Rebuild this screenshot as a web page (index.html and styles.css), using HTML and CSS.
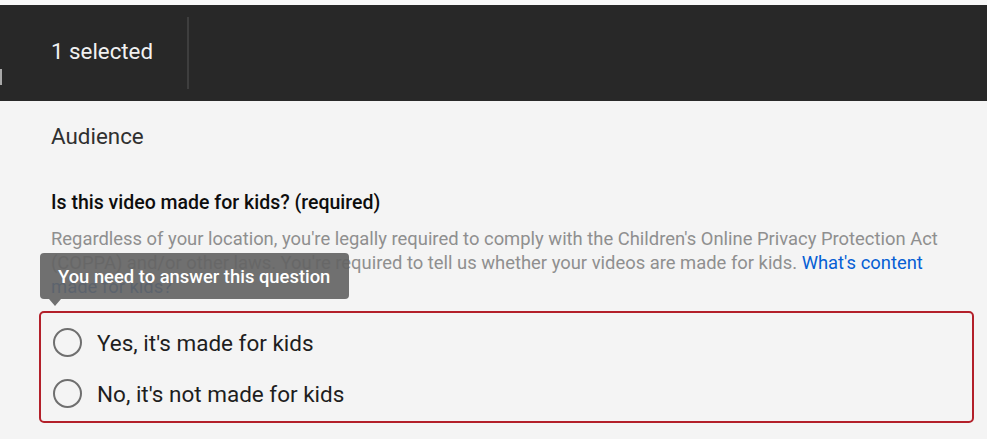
FILE: index.html
```html
<!DOCTYPE html>
<html lang="en">
<head>
<meta charset="utf-8">
<title>Audience</title>
<link rel="stylesheet" href="styles.css">
</head>
<body>
<div class="top-strip"></div>
<header class="header">
  <div class="edge-mark"></div>
  <div class="selected">1 selected</div>
  <div class="divider"></div>
</header>
<main class="content">
  <h2 class="section-title">Audience</h2>
  <h3 class="question">Is this video made for kids? (required)</h3>
  <div class="desc-wrap">
    <p class="desc">Regardless of your location, you're legally required to comply with the Children's Online Privacy Protection Act (COPPA) and/or other laws. You're required to tell us whether your videos are made for kids. <a class="link" href="#">What's content made for kids?</a></p>
    <div class="tooltip">You need to answer this question</div>
  </div>
  <div class="radio-box">
    <label class="radio-row"><span class="radio"></span><span class="radio-label">Yes, it's made for kids</span></label>
    <label class="radio-row"><span class="radio"></span><span class="radio-label">No, it's not made for kids</span></label>
  </div>
</main>
</body>
</html>
```
FILE: styles.css
```css
* { box-sizing: border-box; }
html, body { margin: 0; padding: 0; }
body {
  background: #f4f4f4;
  font-family: Roboto, "Noto Sans", sans-serif;
  width: 987px;
  height: 439px;
  overflow: hidden;
}
.top-strip {
  height: 5px;
  background: #f9f9f9;
}
.header {
  position: relative;
  height: 96px;
  background: #282828;
  display: flex;
  align-items: center;
}
.edge-mark {
  position: absolute;
  left: 0;
  top: 64px;
  width: 2px;
  height: 16px;
  background: #a8a8a8;
}
.selected {
  width: 187px;
  padding-left: 51px;
  color: #f1f1f1;
  font-size: 22.3px;
  line-height: 26px;
  margin-top: -5px;
}
.divider {
  width: 2px;
  height: 72px;
  background: #3e3e3e;
}
.content {
  padding: 22px 14px 0 51px;
}
.section-title {
  margin: 0;
  font-size: 22.4px;
  font-weight: 400;
  line-height: 26px;
  color: #303030;
}
.question {
  margin: 42px 0 0;
  font-size: 19.5px;
  font-weight: 500;
  line-height: 24px;
  color: #0d0d0d;
}
.desc-wrap {
  position: relative;
  margin-top: 12px;
}
.desc {
  margin: 0;
  font-size: 18.4px;
  line-height: 24px;
  color: #8f8f8f;
}
.link {
  color: #065fd4;
  text-decoration: none;
}
.tooltip {
  position: absolute;
  left: -11px;
  top: 26px;
  width: 309px;
  height: 46px;
  padding-left: 18px;
  display: flex;
  align-items: center;
  background: rgba(100, 100, 100, 0.92);
  border-radius: 4px;
  color: #fff;
  font-size: 18.4px;
  font-weight: 500;
}
.tooltip::after {
  content: "";
  position: absolute;
  left: 9px;
  top: 46px;
  border-left: 6px solid transparent;
  border-right: 6px solid transparent;
  border-top: 7px solid rgba(100, 100, 100, 0.92);
}
.radio-box {
  margin: 12px 0 0 -12px;
  width: 935px;
  height: 112px;
  border: 2px solid #b3202a;
  border-radius: 5px;
  padding: 4px 0 0 12px;
}
.radio-row {
  display: flex;
  align-items: center;
  height: 51px;
}
.radio {
  width: 29px;
  height: 29px;
  border: 2.5px solid #6f6f6f;
  border-radius: 50%;
  flex: none;
}
.radio-label {
  margin-left: 15px;
  font-size: 22.5px;
  color: #1e1e1e;
}
```
